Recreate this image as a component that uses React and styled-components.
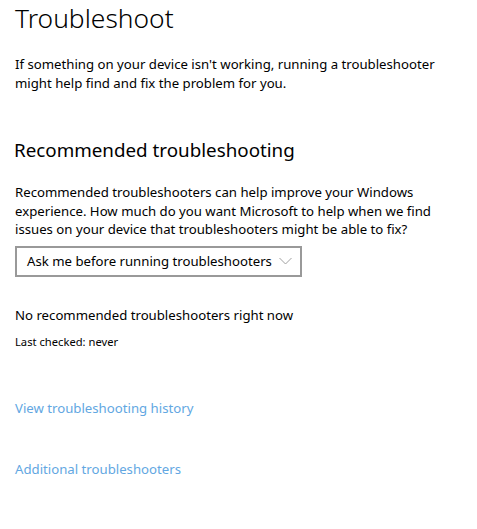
import React from "react";
import styled, { createGlobalStyle } from "styled-components";

const GlobalStyle = createGlobalStyle`
	html, body {
		margin: 0;
		padding: 0;
		background: #ffffff;
	}
	body {
		font-family: "Noto Sans", "Open Sans", sans-serif;
		color: #000000;
	}
`;

const Page = styled.div`
	display: flex;
	flex-direction: column;
	padding: 0 0 0 15px;
	width: 477px;
	box-sizing: border-box;
`;

const Title = styled.h1`
	margin: 0;
	font-size: 26.4px;
	font-weight: 300;
	line-height: 36px;
`;

const SectionTitle = styled.h2`
	margin: 0;
	font-size: 18.8px;
	font-weight: 400;
	line-height: 26px;
	margin-left: -1px;
	margin-top: ${(p) => p.$top || 0}px;
`;

const Text = styled.p`
	margin: 0;
	font-size: 13.2px;
	line-height: 18.5px;
	margin-top: ${(p) => p.$top || 0}px;
	max-width: 440px;
`;

const Small = styled.div`
	font-size: 11.2px;
	line-height: 15px;
	margin-top: ${(p) => p.$top || 0}px;
`;

const Select = styled.button`
	display: flex;
	align-items: center;
	justify-content: space-between;
	box-sizing: border-box;
	width: 287px;
	height: 31px;
	margin-top: ${(p) => p.$top || 0}px;
	padding: 0 8px 0 10px;
	border: 2px solid #999999;
	background: #ffffff;
	font-family: inherit;
	font-size: 13.2px;
	color: #000000;
	white-space: nowrap;
	text-align: left;
	cursor: pointer;
`;

const Link = styled.a`
	display: block;
	font-size: 13.2px;
	line-height: 19px;
	color: #62a7e2;
	text-decoration: none;
	margin-top: ${(p) => p.$top || 0}px;
	cursor: pointer;
`;

function Chevron() {
	return (
		<svg width="13" height="8" viewBox="0 0 13 8">
			<path d="M0.5 1 L6.5 7 L12.5 1" fill="none" stroke="#a0a0a0" strokeWidth="1" />
		</svg>
	);
}

export default function App() {
	return (
		<>
			<GlobalStyle />
			<Page>
				<Title>Troubleshoot</Title>
				<Text $top={19}>
					If something on your device isn't working, running a troubleshooter
					might help find and fix the problem for you.
				</Text>
				<SectionTitle $top={45}>Recommended troubleshooting</SectionTitle>
				<Text $top={20}>
					Recommended troubleshooters can help improve your Windows
					experience. How much do you want Microsoft to help when we find
					issues on your device that troubleshooters might be able to fix?
				</Text>
				<Select $top={7}>
					<span>Ask me before running troubleshooters</span>
					<Chevron />
				</Select>
				<Text $top={29}>No recommended troubleshooters right now</Text>
				<Small $top={10}>Last checked: never</Small>
				<Link $top={50}>View troubleshooting history</Link>
				<Link $top={42}>Additional troubleshooters</Link>
			</Page>
		</>
	);
}
